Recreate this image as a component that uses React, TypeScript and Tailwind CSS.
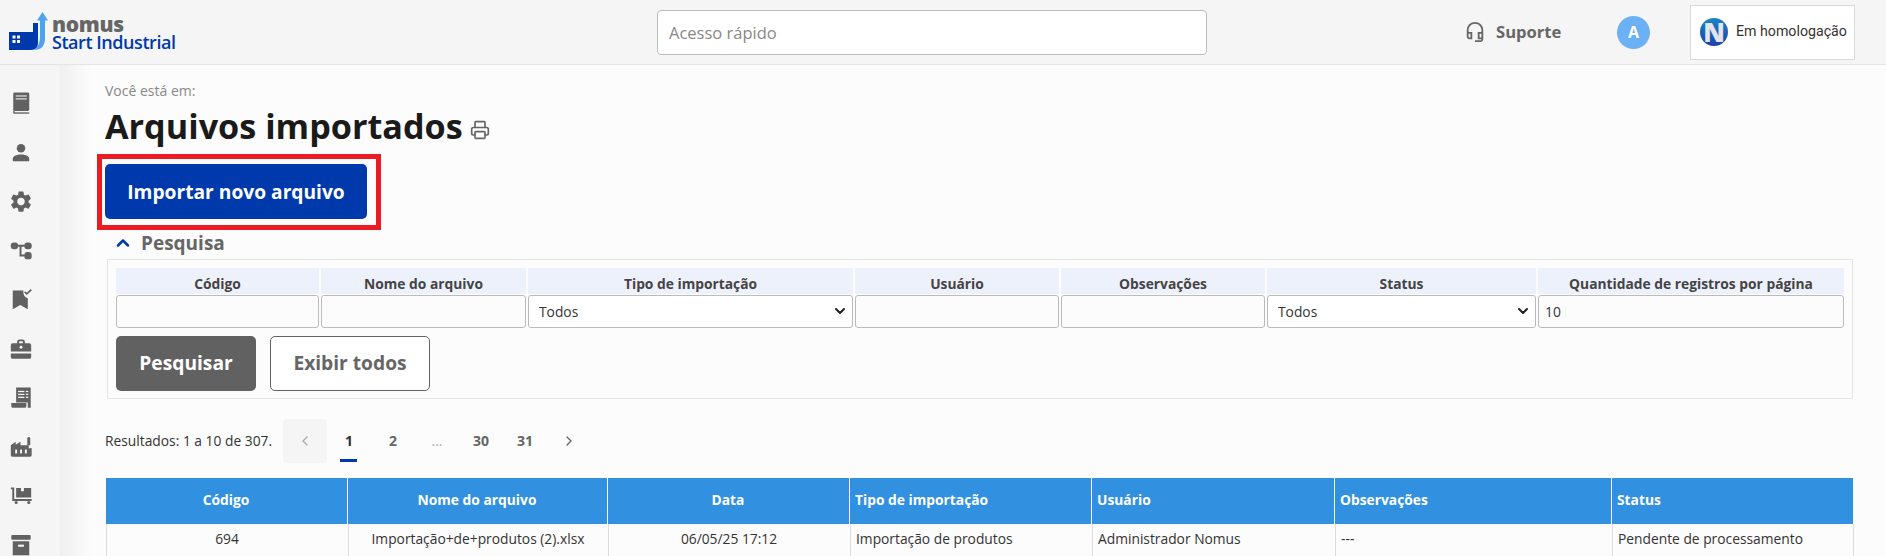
import { ChevronDown, ChevronLeft, ChevronRight, ChevronUp, Printer } from "lucide-react";
import { MdOutlineHeadsetMic, MdSettings } from "react-icons/md";

const fieldColumns = "grid grid-cols-[203px_205px_325px_204px_204px_269px_306px] gap-x-[2px]";

const filters = [
  { label: "Código", value: "" },
  { label: "Nome do arquivo", value: "" },
  { label: "Tipo de importação", select: true },
  { label: "Usuário", value: "" },
  { label: "Observações", value: "" },
  { label: "Status", select: true },
  { label: "Quantidade de registros por página", value: "10" },
];

const tableColumns = "grid grid-cols-[242px_260px_242px_242px_243px_277px_241px]";

const tableHeaders = [
  { label: "Código", center: true },
  { label: "Nome do arquivo", center: true },
  { label: "Data", center: true },
  { label: "Tipo de importação" },
  { label: "Usuário" },
  { label: "Observações" },
  { label: "Status" },
];

const firstRow = [
  { label: "694", center: true },
  { label: "Importação+de+produtos (2).xlsx", center: true },
  { label: "06/05/25 17:12", center: true },
  { label: "Importação de produtos" },
  { label: "Administrador Nomus" },
  { label: "---" },
  { label: "Pendente de processamento" },
];

function BookIcon() {
  return (
    <svg viewBox="0 0 24 24" className="h-6 w-6 fill-[#616161]">
      <rect x="4" y="0.5" width="16.5" height="19" rx="1.5" />
      <rect x="6.5" y="3.5" width="11.5" height="1.2" fill="#e8e8e8" />
      <rect x="6.5" y="6.5" width="11.5" height="1.2" fill="#e8e8e8" />
      <rect x="4.5" y="21" width="16" height="1.4" />
      <rect x="4" y="19" width="1.4" height="3" />
    </svg>
  );
}

function PersonIcon() {
  return (
    <svg viewBox="0 0 24 24" className="h-6 w-6 fill-[#616161]">
      <circle cx="12" cy="7.5" r="4.4" />
      <path d="M3.5 20v-1.8c0-2.8 4.2-4.4 8.5-4.400s8.500 1.600 8.500 4.400V20a1 1 0 0 1-1 1h-15a1 1 0 0 1-1-1Z" />
    </svg>
  );
}

function TreeIcon() {
  return (
    <svg viewBox="0 0 24 24" className="h-6 w-6 fill-[#616161]">
      <rect x="1.500" y="3.500" width="7.500" height="7" rx="3" />
      <rect x="15.500" y="3.500" width="7.500" height="7" rx="3" />
      <rect x="15.500" y="13.500" width="7.500" height="7.500" rx="3" />
      <path d="M8 6h8v2h-3.500v8H16v2h-5.500V8H8Z" />
    </svg>
  );
}

function BookmarkIcon() {
  return (
    <svg viewBox="0 0 24 24" className="h-6 w-6 fill-[#616161]">
      <path d="M3.500 2.500H14.500C14 7 16 9.500 19 10.500V22l-7.800-4.500L3.500 22Z" />
      <path d="M15.200 4.500l1.300-1.200 1.500 1.500 4-3.800 1.200 1.200-5.200 5Z" />
    </svg>
  );
}

function BriefcaseIcon() {
  return (
    <svg viewBox="0 0 24 24" className="h-6 w-6 fill-[#616161]">
      <path d="M8 6.500V5a2.500 2.500 0 0 1 2.500-2.500h3A2.500 2.500 0 0 1 16 5v1.500h4.500A2 2 0 0 1 22.500 8.500V15H1.500V8.500a2 2 0 0 1 2-2Zm2 0h4V5a.5.5 0 0 0-.5-.5h-3a.5.5 0 0 0-.5.5Z" />
      <circle cx="12" cy="10.500" r="1.500" fill="#f5f5f5" />
      <path d="M1.500 17h21v3.500a2 2 0 0 1-2 2h-17a2 2 0 0 1-2-2Z" />
    </svg>
  );
}

function ReceiptIcon() {
  return (
    <svg viewBox="0 0 24 24" className="h-6 w-6 fill-[#616161]">
      <path d="M7 1.500h15v21h-3v-5.500H7Z" />
      <path d="M2 17.500h15.500v3c0 1.200-.7 2-2 2H4c-1.200 0-2-.8-2-2Z" />
      <rect x="9" y="5" width="6.500" height="1.300" fill="#f5f5f5" />
      <rect x="9" y="8" width="6.500" height="1.300" fill="#f5f5f5" />
      <rect x="9" y="11" width="6.500" height="1.300" fill="#f5f5f5" />
      <rect x="17" y="5" width="2.500" height="1.300" fill="#f5f5f5" />
      <rect x="17" y="8" width="2.500" height="1.300" fill="#f5f5f5" />
      <rect x="17" y="11" width="2.500" height="1.300" fill="#f5f5f5" />
    </svg>
  );
}

function FactoryIcon() {
  return (
    <svg viewBox="0 0 24 24" className="h-6 w-6 fill-[#616161]">
      <path d="M1.500 10.500l5-3.500v3l5-3v3.500h8.500V14l3-.5V21a1.500 1.500 0 0 1-1.500 1.500H3A1.500 1.500 0 0 1 1.500 21Z" />
      <path d="M18.500 3.500a1.500 1.500 0 0 1 3 0V10.500h-3Z" />
      <rect x="6" y="15" width="2" height="4" fill="#f5f5f5" />
      <rect x="11" y="15" width="2" height="4" fill="#f5f5f5" />
      <rect x="16" y="15" width="2" height="4" fill="#f5f5f5" />
    </svg>
  );
}

function DollyIcon() {
  return (
    <svg viewBox="0 0 24 24" className="h-6 w-6 fill-[#616161]">
      <path d="M1.500 3.500h3.500v12h18v2H3V5.500H1.500Z" />
      <path d="M7 4h5v3.500h3V4h7.500v10H7Z" />
      <circle cx="7" cy="19" r="1.600" />
      <circle cx="20" cy="19" r="1.600" />
    </svg>
  );
}

function ArchiveIcon() {
  return (
    <svg viewBox="0 0 24 24" className="h-6 w-6 fill-[#616161]">
      <rect x="2" y="2" width="20" height="5" rx="1" />
      <path d="M3.500 8.500h17V23h-17Z" />
      <rect x="9" y="12" width="6" height="2.200" fill="#f5f5f5" />
    </svg>
  );
}

function NomusLogo() {
  return (
    <svg viewBox="0 0 40 38" className="h-[38px] w-10 shrink-0">
      <path d="M0 20H24V11H29V31Q29 38 22 38H0Z" fill="#0039ac" />
      <path d="M33.500 0L39 8.500H36V26Q36 38 25 38Q31 34 31 24V8.500H28Z" fill="#4da3ee" />
      <rect x="3.500" y="23.500" width="3" height="3" fill="#fff" />
      <rect x="8" y="23.500" width="3" height="3" fill="#fff" />
      <rect x="3.500" y="28" width="3" height="3" fill="#fff" />
      <rect x="8" y="28" width="3" height="3" fill="#fff" />
    </svg>
  );
}

function CompanyLogo() {
  return (
    <svg viewBox="0 0 28 28" className="h-7 w-7 shrink-0">
      <defs>
        <linearGradient id="companyBlue" x1="0" y1="0" x2="0" y2="1">
          <stop offset="0" stopColor="#1a86c8" />
          <stop offset="1" stopColor="#1d3fa8" />
        </linearGradient>
      </defs>
      <circle cx="14" cy="14" r="14" fill="url(#companyBlue)" />
      <text x="14" y="23.500" textAnchor="middle" fontFamily="'Open Sans', sans-serif" fontWeight="800" fontSize="26" fill="#e2e5ea">
        N
      </text>
    </svg>
  );
}

export default function App() {
  const sidebarIcons = [
    <BookIcon key="book" />,
    <PersonIcon key="person" />,
    <MdSettings key="settings" className="-my-px h-[26px] w-[26px] text-[#616161]" />,
    <TreeIcon key="tree" />,
    <BookmarkIcon key="bookmark" />,
    <BriefcaseIcon key="briefcase" />,
    <ReceiptIcon key="receipt" />,
    <FactoryIcon key="factory" />,
    <DollyIcon key="dolly" />,
    <ArchiveIcon key="archive" />,
  ];

  return (
    <div className="flex h-[556px] w-[1886px] flex-col overflow-hidden bg-[#fcfcfc] font-['Open_Sans',sans-serif] text-[#333]">
      <header className="flex h-[65px] shrink-0 items-center border-b border-[#e5e5e5] bg-[#f5f5f5]">
        <div className="flex w-[657px] shrink-0 items-end gap-[3px] pb-[2px] pl-[9px]">
          <NomusLogo />
          <div className="-mb-px flex flex-col">
            <span className="text-[21px] leading-[17px] font-extrabold tracking-[-0.3px] text-[#666]">nomus</span>
            <span className="text-[18px] leading-[18px] font-semibold tracking-[-0.45px] text-[#0039ac]">Start Industrial</span>
          </div>
        </div>
        <input
          placeholder="Acesso rápido"
          className="h-[45px] w-[550px] rounded-[4px] border border-[#bbb] bg-white px-[11px] text-[16.5px] text-[#333] placeholder:text-[#888]"
        />
        <div className="ml-[257px] flex w-[153px] items-center gap-[10px] text-[16.6px] font-bold text-[#666]">
          <MdOutlineHeadsetMic className="h-[22px] w-[22px] shrink-0" />
          Suporte
        </div>
        <span className="flex h-[33px] w-[33px] shrink-0 items-center justify-center rounded-full bg-[#6cb0f5] text-base font-bold text-white">A</span>
        <div className="ml-10 flex h-[55px] w-[165px] items-center gap-2 border border-[#d9d9d9] bg-white pl-[9px] font-['Roboto',sans-serif] text-[14.2px] whitespace-nowrap text-[#333]">
          <CompanyLogo />
          Em homologação
        </div>
      </header>

      <div className="flex min-h-0 flex-1">
        <aside className="flex w-[60px] shrink-0 flex-col items-center gap-[25.700px] bg-[#f5f5f5] pt-[27px] pr-[18px]">
          {sidebarIcons}
        </aside>

        <main className="min-w-0 flex-1 bg-[linear-gradient(90deg,#f0f0f0,#fcfcfc_32px,#fcfcfc)] pt-[18px] pr-[33px] pl-[45px]">
          <p className="text-sm leading-4 text-[#888]">Você está em:</p>
          <div className="mt-[7px] flex h-[40px] items-center gap-[7px]">
            <h1 className="text-[34.2px] leading-10 font-bold text-[#1a1a1a]">Arquivos importados</h1>
            <Printer className="mt-2 h-5 w-5 text-[#666]" strokeWidth={2} />
          </div>

          <div className="relative mt-[18px] w-[262px]">
            <button type="button" className="block h-[55px] w-full rounded-[5px] bg-[#0039ac] pt-[2px] text-[19.2px] font-bold text-white">
              Importar novo arquivo
            </button>
            <div className="absolute top-[-10px] left-[-8px] h-[76px] w-[284px] border-[5px] border-[#ed1c24]" />
          </div>

          <div className="mt-[13px] flex h-[22px] items-center gap-2 pl-2">
            <ChevronUp className="h-5 w-5 text-[#0039ac]" strokeWidth={3} />
            <span className="text-[19px] font-bold text-[#666]">Pesquisa</span>
          </div>

          <section className="mt-[5px] ml-[2px] h-[140px] w-[1746px] border border-[#e5e5e5] px-2 pt-2">
            <div className={fieldColumns}>
              {filters.map((filter) => (
                <div key={filter.label} className="flex flex-col gap-px">
                  <div className="flex h-[26px] items-center justify-center bg-[#edf1fb] pt-[6px] text-[13.8px] font-bold text-[#444]">{filter.label}</div>
                  {filter.select ? (
                    <div className="relative">
                      <select className="block h-[33px] w-full appearance-none rounded-[3px] border border-[#bbb] bg-white pt-[2px] pl-[10px] text-[13.8px] text-[#333]">
                        <option>Todos</option>
                      </select>
                      <ChevronDown className="pointer-events-none absolute top-[8px] right-[5px] h-4 w-4 text-[#222]" strokeWidth={3} />
                    </div>
                  ) : (
                    <input defaultValue={filter.value} className="block h-[33px] w-full rounded-[3px] border border-[#bbb] bg-[#fcfcfc] px-[6px] text-[13.8px] text-[#333]" />
                  )}
                </div>
              ))}
            </div>
            <div className="mt-2 flex gap-[14px]">
              <button type="button" className="h-[55px] w-[140px] rounded-[5px] bg-[#616161] text-[19.2px] font-bold text-white">Pesquisar</button>
              <button type="button" className="h-[55px] w-[160px] rounded-[5px] border border-[#616161] bg-white text-[19.2px] font-bold text-[#666]">Exibir todos</button>
            </div>
          </section>

          <div className="mt-5 flex h-11 items-center">
            <span className="w-[178px] shrink-0 text-[13.8px] text-[#333]">Resultados: 1 a 10 de 307.</span>
            <span className="flex h-11 w-11 items-center justify-center rounded-[4px] bg-[#f5f5f5] text-[#aaa]"><ChevronLeft className="h-4 w-4" /></span>
            <span className="relative flex h-11 w-11 items-center justify-center text-sm font-bold text-[#333]">
              1
              <span className="absolute top-10 left-[13px] h-[3px] w-[17px] bg-[#0039ac]" />
            </span>
            <span className="flex h-11 w-11 items-center justify-center text-sm font-bold text-[#666]">2</span>
            <span className="flex h-11 w-11 items-center justify-center text-sm text-[#aaa]">...</span>
            <span className="flex h-11 w-11 items-center justify-center text-sm font-bold text-[#666]">30</span>
            <span className="flex h-11 w-11 items-center justify-center text-sm font-bold text-[#666]">31</span>
            <span className="flex h-11 w-11 items-center justify-center text-[#666]"><ChevronRight className="h-4 w-4" /></span>
          </div>

          <div className="mt-[15px] ml-px w-[1747px]">
            <div className={`${tableColumns} h-[46px] bg-[#3190df]`}>
              {tableHeaders.map((cell) => (
                <div
                  key={cell.label}
                  className={`flex items-center border-r border-white pb-[2px] pl-[5px] text-[13.8px] font-bold text-white last:border-r-0 ${cell.center ? "justify-center pr-[6px]" : ""}`}
                >
                  {cell.label}
                </div>
              ))}
            </div>
            <div className={`${tableColumns} h-[40px] border-l border-[#ddd]`}>
              {firstRow.map((cell) => (
                <div
                  key={cell.label}
                  className={`flex items-center border-r border-[#ddd] pb-[10px] pl-[5px] text-[13.8px] text-[#333] ${cell.center ? "justify-center pr-[6px]" : ""}`}
                >
                  {cell.label}
                </div>
              ))}
            </div>
          </div>
        </main>
      </div>
    </div>
  );
}
